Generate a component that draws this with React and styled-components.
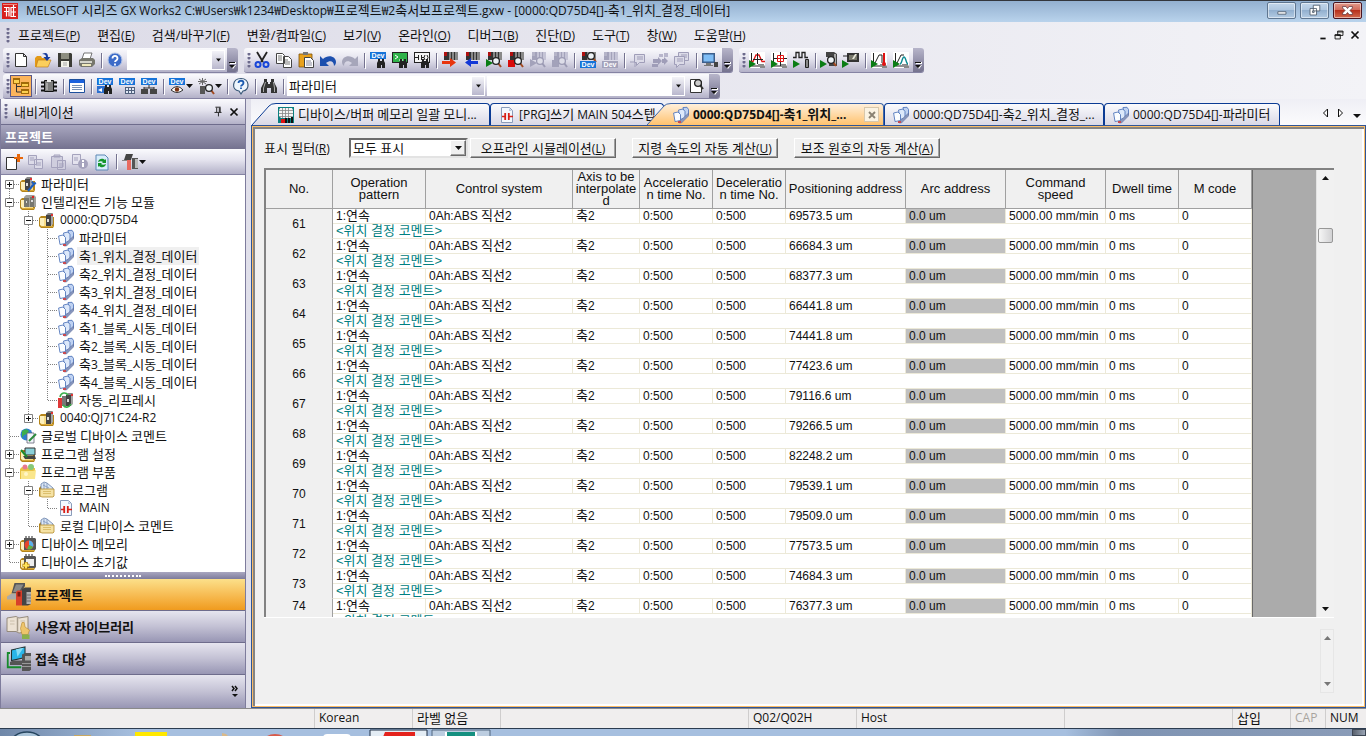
import { Fragment } from "react"
import styled, { createGlobalStyle, css } from "styled-components"

const MENUS = [
    ["프로젝트", "P"],
    ["편집", "E"],
    ["검색/바꾸기", "F"],
    ["변환/컴파일", "C"],
    ["보기", "V"],
    ["온라인", "O"],
    ["디버그", "B"],
    ["진단", "D"],
    ["도구", "T"],
    ["창", "W"],
    ["도움말", "H"],
]

const EDIT_TOOLS = [
    "cut", "copy", "paste", "undo", "redo", "|",
    "devFind", "commandFind", "contactFind", "|",
    "plcWrite", "plcRead", "monitorStart", "monitorStop", "monitorStartOff", "monitorStopOff", "|",
    "devWatch", "devWatchOff", "|",
    "noteOff", "moduleOff", "notesOff", "|",
    "computer",
]

const SIM_TOOLS = ["waveRed", "waveTarget", "pulse", "|", "testFind", "testMonitor", "|", "waveTemp", "waveTeal"]

// guides: "|" draws the line of an ancestor that has more siblings below
const TREE = [
    { text: "파라미터", icon: "folderTool", box: "+", first: true },
    { text: "인텔리전트 기능 모듈", icon: "folderModule", box: "-" },
    { text: "0000:QD75D4", icon: "folderUnit", guides: "|", box: "-" },
    { text: "파라미터", icon: "sheets", guides: "||" },
    { text: "축1_위치_결정_데이터", icon: "sheets", guides: "||", selected: true },
    { text: "축2_위치_결정_데이터", icon: "sheets", guides: "||" },
    { text: "축3_위치_결정_데이터", icon: "sheets", guides: "||" },
    { text: "축4_위치_결정_데이터", icon: "sheets", guides: "||" },
    { text: "축1_블록_시동_데이터", icon: "sheets", guides: "||" },
    { text: "축2_블록_시동_데이터", icon: "sheets", guides: "||" },
    { text: "축3_블록_시동_데이터", icon: "sheets", guides: "||" },
    { text: "축4_블록_시동_데이터", icon: "sheets", guides: "||" },
    { text: "자동_리프레시", icon: "autoRefresh", guides: "||", last: true },
    { text: "0040:QJ71C24-R2", icon: "folderUnit", guides: "|", box: "+", last: true },
    { text: "글로벌 디바이스 코멘트", icon: "globe" },
    { text: "프로그램 설정", icon: "folderLaptop", box: "+" },
    { text: "프로그램 부품", icon: "folderParts", box: "-" },
    { text: "프로그램", icon: "folderDocs", guides: "|", box: "-" },
    { text: "MAIN", icon: "ladder", guides: "||", last: true },
    { text: "로컬 디바이스 코멘트", icon: "folderDocs", guides: "|", last: true },
    { text: "디바이스 메모리", icon: "deviceMemory", box: "+" },
    { text: "디바이스 초기값", icon: "deviceInit", last: true },
]

const COLUMNS = [
    { width: 67, lines: ["No."] },
    { width: 93, lines: ["Operation", "pattern"] },
    { width: 147, lines: ["Control system"] },
    { width: 67, lines: ["Axis to be", "interpolate", "d"] },
    { width: 73, lines: ["Acceleratio", "n time No."] },
    { width: 73, lines: ["Deceleratio", "n time No."] },
    { width: 120, lines: ["Positioning address"] },
    { width: 100, lines: ["Arc address"] },
    { width: 100, lines: ["Command", "speed"] },
    { width: 73, lines: ["Dwell time"] },
    { width: 73, lines: ["M code"] },
]

const ADDRESSES = [
    "69573.5", "66684.3", "68377.3", "66441.8", "74441.8", "77423.6", "79116.6",
    "79266.5", "82248.2", "79539.1", "79509.0", "77573.5", "74684.3", "76377.3",
]

const FIRST_NO = 61

/* ---------- icon parts ---------- */

const Play = ({ x = 0, y = 8, fill = "#0a7d14" }) => <path d={`M${x} ${y}l7 4-7 4z`} fill={fill} />

const DevTag = ({ x = 0, y = 0, fill = "#1673d8" }) => (
    <>
        <rect x={x} y={y} width="16" height="7" fill={fill} />
        <text x={x + 8} y={y + 6} textAnchor="middle" fontSize="7" fontWeight="bold" fontFamily="Liberation Sans, sans-serif" fill="#fff">Dev</text>
    </>
)

const Binoculars = ({ x = 7, y = 7 }) => (
    <path d={`M${x + 1} ${y}h2v2h2v-2h2v2l1 2v5h-3v-3h-1v3h-4v-5l1-2z`} fill="#222" />
)

const Plc = ({ y = 0, a = "#b01010", b = "#333", c = "#888" }) => (
    <>
        <path d={`M2 ${y}h5v8h-5z`} fill={b} />
        <path d={`M2 ${y}h3v4h-3z`} fill={a} />
        <path d={`M7 ${y}h2v8h-2zM10 ${y}h2v8h-2zM13 ${y}h3v8h-3z`} fill={c} />
        <path d={`M9 ${y}h1v8h-1zM12 ${y}h1v8h-1z`} fill={b} />
    </>
)

const Lens = ({ x = 10, y = 9, stroke = "#222", fill = "#eef3f6", handle = "#a34a20" }) => (
    <>
        <path d={`M${x + 2} ${y + 2}l3 4`} stroke={handle} strokeWidth="2" />
        <circle cx={x} cy={y} r="3.4" fill={fill} stroke={stroke} strokeWidth="1.3" />
    </>
)

const Folder = () => (
    <>
        <path d="M0 6l2-2h5l1 1h7v9l-1 2H2l-2-2z" fill="#b5851a" />
        <path d="M1 6h12v8H3l-2-1z" fill="#f7dc86" />
        <path d="M1 6h4v8H3l-2-1z" fill="#fdf0bc" />
        <path d="M2 14h12v1H2z" fill="#d8a838" />
    </>
)

const Unit = ({ x = 7 }) => (
    <>
        <path d={`M${x} 3l2-2h5l-1 2z`} fill="#888" />
        <path d={`M${x} 3h5v11h-5z`} fill="#444" />
        <path d={`M${x + 5} 3l2-1v10l-2 2z`} fill="#a5a5a5" />
        <path d={`M${x + 1} 7h2v3h-2z`} fill="#ddd" />
        <path d={`M${x + 5} 2h2v2h-2z`} fill="#d33" />
    </>
)

const Note = ({ x = 4, y = 2 }) => (
    <>
        <path d={`M${x + 0.5} ${y + 0.5}h10v8h-5l-3 3v-3h-2z`} fill="#dcdbe8" stroke="#9f9db8" />
        <path d={`M${x + 3} ${y + 3}h6M${x + 3} ${y + 5}h6`} stroke="#9f9db8" />
    </>
)

const Axes = () => (
    <>
        <path d="M0 0h16v16H0z" fill="#fff" />
        <path d="M2.500 1v13h13" fill="none" stroke="#222" />
        <path d="M9 12h6v1H9zM11 14h5v2h-5z" fill="#888" />
    </>
)

const ICONS = {
    app: (
        <>
            <path d="M0 0h16v16H0z" fill="#d8201e" />
            <path d="M1 1h14v1H1z" fill="#f08a80" />
            <path d="M2 4.500h5v9M2 8.500h5M4.500 4.500v9M14 4.500H9v4.500h5M9 9v4.500h5M11.500 2v12" fill="none" stroke="#fff" strokeWidth="1.200" />
        </>
    ),
    newFile: <path d="M2.500 1.500h8l3 3v10h-11zM10.500 1.500v3h3" fill="#fff" stroke="#333" />,
    open: (
        <>
            <path d="M0 6l2-2h4l1 2h6v9H0z" fill="#e39a17" />
            <path d="M3 8h13l-3 7H1z" fill="#fbcf5c" stroke="#b87412" strokeWidth=".6" />
            <path d="M7 2c4-2 6-1 6 3h2.500l-3.500 4-3.500-4H11c0-2-1-3-4-3z" fill="#173c9e" />
        </>
    ),
    save: (
        <>
            <path d="M1 1h13l1 1v13H1z" fill="#3c3c36" />
            <path d="M4 1h8v6H4z" fill="#8d8d80" />
            <path d="M4 9h8v6H4z" fill="#f4f4ea" />
            <path d="M6 11h4M6 13h4" stroke="#aaa" />
        </>
    ),
    print: (
        <>
            <path d="M5 1h8l-2 6H3z" fill="#fff" stroke="#555" strokeWidth=".8" />
            <path d="M0 8l3-2h11l2 2v4l-3 3H2l-2-2z" fill="#77776d" />
            <path d="M1 9h12v2H1z" fill="#d5d5cc" />
            <path d="M3 12h9v2H3z" fill="#efe9bc" />
        </>
    ),
    help: (
        <>
            <circle cx="8" cy="8" r="7" fill="#3c6bc8" stroke="#b5c6e8" />
            <path d="M5.500 6.500c0-3.500 5-3.500 5 0 0 2-2.500 1.800-2.500 3.500M8 11.500v2" fill="none" stroke="#fff" strokeWidth="1.800" />
        </>
    ),
    cut: (
        <>
            <path d="M3 0l6 10M13 0L7 10" stroke="#222" strokeWidth="1.800" />
            <circle cx="4" cy="12.500" r="2.500" fill="none" stroke="#1746d8" strokeWidth="2" />
            <circle cx="12" cy="12.500" r="2.500" fill="none" stroke="#1746d8" strokeWidth="2" />
        </>
    ),
    copy: (
        <>
            <path d="M.5 1.500h6l2 2v8h-8zM7.500 4.500h5l3 3v8h-8z" fill="#fff" stroke="#444" />
            <path d="M2 4h4M2 6h4M2 8h4M9 8h3M9 10h5M9 12h5" stroke="#777" />
        </>
    ),
    paste: (
        <>
            <path d="M1 2h13v13H1z" fill="#e8a11c" stroke="#7c520a" strokeWidth=".8" />
            <path d="M5 0h5v3H5z" fill="#777" />
            <path d="M6.500 5.500h6l3 3v7h-9z" fill="#fff" stroke="#444" />
            <path d="M8 9h5M8 11h6M8 13h6" stroke="#889" />
        </>
    ),
    undo: <path d="M0 4l3 3c5-5 13-3 13 3 0 2-1 3-2 4 0-5-4-6-8-3l3 3H0z" fill="#1c4fae" />,
    redo: <path d="M16 4l-3 3C8 2 0 4 0 10c0 2 1 3 2 4 0-5 4-6 8-3l-3 3h9z" fill="#a6a6ba" />,
    devFind: <><DevTag /><Binoculars /></>,
    commandFind: (
        <>
            <path d="M0 0h16v11H0z" fill="#222" />
            <path d="M1 1h14v9H1z" fill="#2fb34a" />
            <path d="M3 3l3 2-3 2M7 8h4" fill="none" stroke="#fff" />
            <Binoculars />
        </>
    ),
    contactFind: (
        <>
            <path d="M0 0h16v11H0z" fill="#222" />
            <path d="M1 1h14v9H1z" fill="#f4f4f4" />
            <path d="M1 5.500h3M4.500 3v5M7.500 3v5M7 5.500h3M11 3q-2 2.500 0 5M13 3q2 2.500 0 5" fill="none" stroke="#222" />
            <Binoculars />
        </>
    ),
    plcWrite: <><Plc /><path d="M0 9h8V6l6 4.500L8 15v-3H0z" fill="#e8350e" /></>,
    plcRead: <><Plc /><path d="M14 9H7V6l-6 4.500L7 15v-3h7z" fill="#1338d6" /></>,
    monitorStart: <><Plc /><Play y={7} /><Lens /></>,
    monitorStop: <><Plc /><path d="M0 8h7v7H0z" fill="#d80c0c" /><Lens /></>,
    monitorStartOff: (
        <>
            <Plc a="#b5b4c8" b="#a3a2ba" c="#c5c4d6" />
            <Play y={7} fill="#a3a2ba" />
            <Lens stroke="#9c9bb4" handle="#9c9bb4" fill="#dddde8" />
        </>
    ),
    monitorStopOff: (
        <>
            <Plc a="#b5b4c8" b="#a3a2ba" c="#c5c4d6" />
            <path d="M0 8h7v7H0z" fill="#a3a2ba" />
            <Lens stroke="#9c9bb4" handle="#9c9bb4" fill="#dddde8" />
        </>
    ),
    devWatch: <><Plc /><Lens x={11} y={4} /><DevTag y={9} /></>,
    devWatchOff: <><Plc a="#b5b4c8" b="#a3a2ba" c="#c5c4d6" /><DevTag y={9} fill="#a3a2ba" /></>,
    noteOff: <><path d="M0 10h5v5" fill="none" stroke="#9f9db8" /><Note /></>,
    moduleOff: (
        <>
            <path d="M7 2h4v3H7zM12 1h4v4h-4z" fill="#b8b6cc" />
            <path d="M1 7h5V5l4 4-4 4v-2H1zM10 7h2V5l4 4-4 4v-2h-2zM0 12h6v3H0z" fill="#9f9db8" />
        </>
    ),
    notesOff: <><Note x={4} y={0} /><Note x={0} y={4} /></>,
    computer: (
        <>
            <path d="M0 1h13v10H0z" fill="#3d5f8c" />
            <path d="M1.500 2.500h10v7h-10z" fill="#7fbdf5" />
            <path d="M4 11h5v2H4zM2 13h9v1H2z" fill="#777" />
            <path d="M12 10h4v5h-4z" fill="#444" />
        </>
    ),
    waveRed: <><Axes /><path d="M1 9.500h3L7 3h3l3 6.500h3" fill="none" stroke="#e01212" strokeWidth="1.300" /><path d="M8.500 1v11M4 7.500h10" stroke="#222" /><Play /></>,
    waveTarget: <><Axes /><path d="M9.500 0v14M3 6.500h13" stroke="#222" /><path d="M6.500 3.500h6v6h-6zM6 6.500h7M9.500 3v7" fill="none" stroke="#e01212" /><Play /></>,
    pulse: <><path d="M0 5.500h3v-5h3v5h3v-5h3v5h3" fill="none" stroke="#222" strokeWidth="1.300" /><path d="M12.500 7.500h3v8h-3z" fill="#888" stroke="#222" /><Play /></>,
    testFind: <><path d="M5 0h8l3 2v12H8V5H5z" fill="#444" /><path d="M13 2h2v11h-2z" fill="#aaa" /><Lens x={10} y={8} /><Play x={-1} /></>,
    testMonitor: <><path d="M4 1h12v9H4z" fill="#333" /><path d="M6 3h8v5H6z" fill="#77776a" /><path d="M0 4h6" stroke="#222" /><path d="M12 2l2 0-3 5h-2z" fill="#e5e5d8" /><Play x={-1} /></>,
    waveTemp: <><Axes /><path d="M4 11l4-8h3v8" fill="none" stroke="#222" /><path d="M12 1h2v10h-2z" fill="#e01212" /><circle cx="13" cy="12" r="2" fill="#e01212" /><Play /></>,
    waveTeal: <><Axes /><path d="M4 11l4-8h3" fill="none" stroke="#222" /><path d="M7 12c2 0 2-7 4-7s2 7 4 7" fill="none" stroke="#0c8c94" strokeWidth="1.400" /><Play /></>,
    treeView: (
        <>
            <path d="M3.500 6v8h5M3.500 8.500h5" fill="none" stroke="#333" />
            <path d="M0 0h7v6H0zM8 4h8v5H8zM8 11h8v5H8z" fill="#a06a08" />
            <path d="M1 2h5v3H1zM9 6h6v2H9zM9 13h6v2H9z" fill="#fbd050" />
        </>
    ),
    chip: (
        <>
            <path d="M3.500 2.500h9v11h-9z" fill="#7d7d7d" stroke="#111" />
            <path d="M0 4.500h3M0 8.500h3M0 12.500h3M13 4.500h3M13 8.500h3M13 12.500h3" stroke="#111" strokeWidth="2" />
            <path d="M6 2h4v2H6z" fill="#eee" />
            <path d="M5 5h2v7H5z" fill="#a5a5a5" />
        </>
    ),
    list: (
        <>
            <path d="M.5 1.500h15v13H.5z" fill="#fff" stroke="#1d4f9c" />
            <path d="M1 2h14v3H1z" fill="#1c62dd" />
            <path d="M3 7.500h10M3 9.500h10M3 11.500h10" stroke="#7791b5" />
        </>
    ),
    devUse: <><DevTag /><path d="M0 8h8v7H0z" fill="#2b6fd0" /><path d="M1 12l4-2v4z" fill="#fff" /><Binoculars /></>,
    devTable: <><DevTag /><path d="M6 9h10v7H6z" fill="#50607c" /><path d="M7 10h2v2H7zM10 10h2v2h-2zM13 10h2v2h-2zM7 13h2v2H7zM10 13h2v2h-2zM13 13h2v2h-2z" fill="#dfe8f5" /></>,
    devLink: <><DevTag /><path d="M8 7v3M3 10h10M3 9v3M13 9v3" stroke="#333" /><path d="M0 11h7v5H0zM9 11h7v5H9z" fill="#444" /></>,
    devEye: <><DevTag /><path d="M2 12q6-7 12 0-6 5-12 0z" fill="#fff" stroke="#333" /><circle cx="8" cy="11.500" r="2.200" fill="#7a3314" /></>,
    unitFind: (
        <>
            <path d="M0 3.500h9M4.500 0v7M1 1l7 5M8 1L1 6" stroke="#666" />
            <path d="M2 8h5v8H2z" fill="#555" />
            <Lens x={11} y={10} />
        </>
    ),
    helpBubble: (
        <>
            <path d="M8 0.500c9 0 9 12 2 12.500l-2 3-2-3C-2 12-1 .5 8 .5z" fill="#eef5fc" stroke="#3a5878" strokeWidth="1.200" />
            <path d="M5.500 5c0-3 5-3 5 0 0 2-2.500 1.800-2.500 3.500M8 9.500v1.500" fill="none" stroke="#1c5bb0" strokeWidth="1.800" />
        </>
    ),
    binoculars: (
        <>
            <path d="M3 1h3v3h1v2h2V4h1V1h3v3l3 6v5h-6v-5H6v5H0v-5l3-6z" fill="#333" />
            <path d="M4 4h1L3 10v4H2v-4zM12 4l1 0 1 6v4h-1v-4z" fill="#aaa" />
        </>
    ),
    docFind: <><path d="M1.500 1.500h9l2 2v11h-11z" fill="#fff" stroke="#333" /><Lens x={9} y={5} fill="#ccc" handle="#333" /></>,
    docNew: (
        <>
            <path d="M.5 3.500h10v12H.5z" fill="#fff" stroke="#333" />
            <path d="M11 0h3v3h3v2h-3v3h-3V5H8V3h3z" fill="#e8680c" />
        </>
    ),
    copyOff: <path d="M.5 1.500h8v9h-8zM6.500 5.500h8v9h-8zM2 4h4M2 6h4M8 9h5M8 11h5" fill="#dcdbe8" stroke="#a5a3bd" />,
    pasteOff: <path d="M1.500 2.500h11v11h-11zM4 1h6v2H4zM7.500 6.500h8v9h-8zM9 10h5M9 12h5" fill="#cfcede" stroke="#a5a3bd" />,
    infoOff: (
        <>
            <path d="M.5 .5h8v10h-8zM2 4h4M2 6h4" fill="#e4e3ee" stroke="#a5a3bd" />
            <circle cx="11" cy="10" r="5" fill="#a5a3bd" />
            <path d="M11 6v2M11 9v4" stroke="#fff" strokeWidth="2" />
        </>
    ),
    reload: (
        <>
            <path d="M2 1h9l3 3v12H2z" fill="#d8ecfa" stroke="#5d88b5" />
            <path d="M4 8c1-4 5-4 7-2l1-1v4H8l1-1c-1-1-3-1-5 0zM12 10c-1 4-5 4-7 2l-1 1V9h4L7 10c1 1 3 1 5 0z" fill="#14962a" />
        </>
    ),
    sortModule: (
        <>
            <path d="M4 0h7L9 6H2z" fill="#444" />
            <path d="M0 6h9v1H0z" fill="#888" />
            <path d="M5 6h4v10H5z" fill="#e86a60" />
            <path d="M10 4h6v11h-6z" fill="#555" />
            <path d="M13 5h3v9h-3z" fill="#bbb" />
        </>
    ),
    monitorGrid: (
        <>
            <path d="M0 0h16v16H0z" fill="#0b7f80" />
            <path d="M2 1h12l1 2v6l-2 2H3L1 9V3z" fill="#f4f4f4" />
            <path d="M1 3.500h14M1 6.500h14M1 9.500h13M4.500 1v10M7.500 1v10M10.500 1v10" stroke="#888" strokeWidth=".8" />
            <path d="M3 12h4v4H3z" fill="#e01010" />
            <path d="M7 11h2v5H7zM10 11h2v5h-2zM13 10h2v6h-2z" fill="#111" />
        </>
    ),
    ladder: (
        <>
            <path d="M2.500 .5h8l3 3v12h-11z" fill="#f4f8fe" stroke="#8a9cba" />
            <path d="M10 1v3h3z" fill="#b9c8de" />
            <path d="M3 9.500h3M10 9.500h4" stroke="#d82018" strokeWidth="1.400" />
            <path d="M6.200 6v7M9.800 6v7" stroke="#d82018" strokeWidth="1.800" />
        </>
    ),
    sheets: (
        <>
            <path d="M10 .5l4-.2 1.500 2.200V8L12 10z" fill="#bfd2f2" stroke="#5478bc" strokeWidth=".9" />
            <path d="M5.500 3l4.500-1 2 2.500v6.500l-5 1.500z" fill="#dce8fa" stroke="#5478bc" strokeWidth=".9" />
            <path d="M.6 6l4.400-1 2.500 2.500v6l-5.500 1z" fill="#fbfdff" stroke="#5478bc" strokeWidth=".9" />
            <path d="M7.500 13.500l8-7.500v3l-7 7-2.500 0z" fill="#8796bd" stroke="#5b6a98" strokeWidth=".5" />
            <path d="M5 14h3v2H5z" fill="#c84a50" />
        </>
    ),
    folderTool: <><Folder /><Unit x={5} /><path d="M8 15l6-7M12 5.500l1.500 2.500 2.500-1" fill="none" stroke="#1c5fc0" strokeWidth="2" /></>,
    folderModule: (
        <>
            <Folder />
            <path d="M4 3l2-2h8l2 2v10H4z" fill="#a2a29c" />
            <path d="M4 4h5v9H4zM10 3h4v10h-4z" fill="#77776f" />
            <path d="M6 7h1v2H6zM11 6h2v2h-2z" fill="#ddd" />
            <path d="M12 2h2v2h-2z" fill="#d22" />
        </>
    ),
    folderUnit: <><Folder /><Unit /></>,
    folderLaptop: <><Folder /><path d="M5 2h10v7H5z" fill="#8ad0d8" stroke="#333" /><path d="M3 10h12l1 3H5z" fill="#444" /><path d="M1 4l6 7" stroke="#1c8a2c" strokeWidth="2" /></>,
    folderParts: (
        <>
            <path d="M0 5l2-2h5l1 1h7v11H0z" fill="#e8c244" />
            <circle cx="5" cy="3" r="2.500" fill="#e87a90" />
            <circle cx="11" cy="3" r="3" fill="#86c878" />
            <path d="M1 7h12l3-1-1 9H1z" fill="#fae68c" />
            <circle cx="6" cy="10" r="2" fill="#fff6c8" />
        </>
    ),
    folderDocs: (
        <>
            <path d="M0 6l2-2v10l-1 1-1-1z" fill="#b5851a" />
            <path d="M2 2l3-2 3 1 6 5v5H2z" fill="#dbe7f6" stroke="#667fa8" strokeWidth=".8" />
            <path d="M5 1v7M8 1v7M4 3l6 3" stroke="#7f95ba" strokeWidth=".8" />
            <path d="M1 7h12l2 0v7l-1 1H3l-2-1z" fill="#f5e2a4" stroke="#b28b2c" strokeWidth=".8" />
            <path d="M4 9.500h8M4 11.500h8" stroke="#dcbf6c" />
        </>
    ),
    autoRefresh: <><Unit x={8} /><path d="M0 6h4v10H0z" fill="#e03838" /><path d="M4 4h4v10H4z" fill="#777" /><path d="M2 5c1-5 6-5 8-2M13 12c-2 4-6 4-8 1" fill="none" stroke="#3bb04c" strokeWidth="1.600" /></>,
    globe: (
        <>
            <circle cx="6.500" cy="6.500" r="6" fill="#2d7fd0" />
            <path d="M2 3l4-2 3 2-2 3-3 1-2 3zM8 7l3 1-1 3-3 1z" fill="#3cae4c" />
            <path d="M7 5h7v10H7z" fill="#f2f6fc" stroke="#667" strokeWidth=".8" />
            <path d="M9 13l7-7" stroke="#2c8a3c" strokeWidth="2" />
        </>
    ),
    deviceMemory: (
        <>
            <Folder />
            <path d="M4 2h11l1 1v10l-1 1H4z" fill="#555" />
            <path d="M6 0v2M9 0v2M12 0v2" stroke="#222" />
            <circle cx="9" cy="9" r="4.500" fill="#e8462c" />
            <path d="M9 9V4.500A4.500 4.500 0 0 1 13 11z" fill="#5ab0ec" />
            <path d="M9 9l4 2a4.500 4.500 0 0 1-6 2z" fill="#59b548" />
        </>
    ),
    deviceInit: (
        <>
            <Folder />
            <path d="M4 2h11l1 1v10l-1 1H4z" fill="#555" />
            <path d="M6 5h8v7H6z" fill="#eee" />
            <path d="M6 0v2M9 0v2M12 0v2" stroke="#222" />
            <path d="M6 8v7M2.500 11.500h7" stroke="#a87408" strokeWidth="3.500" />
            <path d="M6 8.500v6M3 11.500h6" stroke="#ffe45c" strokeWidth="2" />
        </>
    ),
    navProject: (
        <>
            <path d="M5 0h7v2L9 7H3z" fill="#555" />
            <path d="M6 1h5L8 6H4z" fill="#8a8a88" />
            <path d="M0 9l3-2h6v2l-2 2H0z" fill="#aaa" />
            <path d="M6 6l1-1h3v10H6z" fill="#d8402a" />
            <path d="M7 6h2v3H7z" fill="#7c1c14" />
            <path d="M10 4l2-1h4v11l-2 1h-4z" fill="#444" />
            <path d="M13 6h3v8h-3z" fill="#b0b0b0" />
            <path d="M13 8h3M13 10h3M13 12h3" stroke="#666" strokeWidth=".6" />
        </>
    ),
    navLibrary: (
        <>
            <path d="M0 2l6-1 2 1 6-1v10l-6 1-2-1-6 0z" fill="#ece2d4" stroke="#8d8273" strokeWidth=".6" />
            <path d="M7 2v9" stroke="#a89d8c" />
            <path d="M2 4h3M2 6h3M9 4h3" stroke="#c8bca8" strokeWidth=".6" />
            <path d="M9 9l1-4 1.500 0 .5 3 3 2-1 3h-4z" fill="#edc56c" stroke="#b8872c" strokeWidth=".4" />
            <path d="M10 13h5v3h-5z" fill="#8ab04c" />
        </>
    ),
    navTarget: (
        <>
            <path d="M2 4H.5v9.500h9" fill="none" stroke="#168a2c" strokeWidth="1.200" />
            <path d="M3 2l9-2v7l-9 2z" fill="#29b5e8" stroke="#233" strokeWidth=".7" />
            <path d="M6 1.500l5-1-4 6z" fill="#84dcf6" />
            <path d="M2 10l2-1h7v3H2z" fill="#555" />
            <path d="M10 5l2-1h4v11l-1 1h-5z" fill="#555" />
            <path d="M12 6h4v3h-4z" fill="#aaa" />
            <path d="M10 11h6M10 13h6" stroke="#999" strokeWidth=".7" />
        </>
    ),
    minimize: <path d="M3.500 9.500h10v3h-10z" fill="#fff" stroke="#4a5868" />,
    restore: <path d="M6.500 1.500h8v7h-8zM2.500 5.500h8v8h-8zM5.500 8.500h2v2h-2z" fill="#fff" stroke="#4a5868" />,
    close: <path d="M2 3h4l2 2.500L10 3h4v2l-3 3 3 3v2h-4L8 10.500 6 13H2v-2l3-3-3-3z" fill="#fff" stroke="#5a3038" strokeWidth=".9" />,
    childMin: <path d="M5 11h6v2H5z" fill="#111" />,
    childRestore: <path d="M6.500 3.500h6v5h-6zM6 4.500h7M3.500 7.500h6v5h-6zM3 8.500h7" fill="#eee" stroke="#111" />,
    childClose: <path d="M4 4l8 8M12 4l-8 8" stroke="#111" strokeWidth="2" />,
    tabClose: <path d="M4 4l8 8M12 4l-8 8" stroke="#8a8272" strokeWidth="2.500" />,
    pin: <path d="M5 2.500h6M6.500 3v5M9.500 3v5M10.500 3v5M4 8.500h8M8.500 9v4" fill="none" stroke="#111" />,
    tabLeft: <path d="M10.500 4v8l-4-4z" fill="#fff" stroke="#111" />,
    tabRight: <path d="M5.500 4v8l4-4z" fill="#fff" stroke="#111" />,
    tabDown: <path d="M4 9h8l-4 4z" fill="#111" />,
}

const Icon = ({ name, size = 16 }) => (
    <IconSvg width={size} height={size} viewBox="0 0 16 16" aria-hidden="true">{ICONS[name]}</IconSvg>
)

const Arrow = ({ up, fill = "#111" }) => (
    <IconSvg width="7" height="4" viewBox="0 0 7 4" aria-hidden="true">
        <path d={up ? "M0 4h7L3.500 0z" : "M0 0h7L3.500 4z"} fill={fill} />
    </IconSvg>
)

// hangul reads one size larger than the latin text beside it
const Mixed = ({ children }) => (
    <span>
        {children.split(/([가-힣]+)/).map((part, i) => i % 2 ? <Hangul key={i}>{part}</Hangul> : part)}
    </span>
)

const Overflow = () => (
    <OverflowButton aria-label="도구 모음 옵션">
        <IconSvg width="7" height="7" viewBox="0 0 7 7">
            <path d="M1 0h6v2H1zM1 3h6L4 7z" fill="#fff" />
            <path d="M0 0h6v1H0zM0 3h6L3 6z" fill="#111" />
        </IconSvg>
    </OverflowButton>
)

const ToolButtons = ({ items }) =>
    items.map((name, i) =>
        name === "|"
            ? <Separator key={i} />
            : <ToolButton key={i} aria-label={name}><Icon name={name} /></ToolButton>
    )

const Combo = ({ label, value, width }) => (
    <ComboBox $width={width}>
        <select aria-label={label} defaultValue={value}>
            <option>{value}</option>
        </select>
        <ComboArrow><Arrow /></ComboArrow>
    </ComboBox>
)

/* ---------- window parts ---------- */

function TitleBar() {
    return (
        <TitleWrapper>
            <Icon name="app" />
            <h1><Mixed>MELSOFT 시리즈 GX Works2 C:₩Users₩k1234₩Desktop₩프로젝트₩2축서보프로젝트.gxw - [0000:QD75D4[]-축1_위치_결정_데이터]</Mixed></h1>
            <WindowButton aria-label="최소화"><Icon name="minimize" /></WindowButton>
            <WindowButton aria-label="이전 크기로"><Icon name="restore" /></WindowButton>
            <WindowButton aria-label="닫기" $danger><Icon name="close" /></WindowButton>
        </TitleWrapper>
    )
}

function MenuBar() {
    return (
        <MenuWrapper>
            <Grip />
            {MENUS.map(([text, key]) => (
                <MenuButton key={key}>{text}<Accel>(<u>{key}</u>)</Accel></MenuButton>
            ))}
            <ChildButtons>
                <IconButton aria-label="최소화"><Icon name="childMin" size={14} /></IconButton>
                <IconButton aria-label="이전 크기로"><Icon name="childRestore" size={14} /></IconButton>
                <IconButton aria-label="닫기"><Icon name="childClose" size={14} /></IconButton>
            </ChildButtons>
        </MenuWrapper>
    )
}

function Toolbars() {
    return (
        <ToolbarArea>
            <ToolbarRow>
                <Toolbar>
                    <Grip />
                    <ToolButtons items={["newFile", "open", "save", "print", "|", "help"]} />
                    <Combo label="도움말 검색" value="" width={98} />
                    <Overflow />
                </Toolbar>
                <Toolbar>
                    <Grip />
                    <ToolButtons items={EDIT_TOOLS} />
                    <Overflow />
                </Toolbar>
                <Toolbar>
                    <Grip />
                    <ToolButtons items={SIM_TOOLS} />
                    <Overflow />
                </Toolbar>
            </ToolbarRow>
            <ToolbarRow>
                <Toolbar>
                    <Grip />
                    <ToolButton aria-label="내비게이션" $active><Icon name="treeView" /></ToolButton>
                    <ToolButtons items={["|", "chip", "|", "list", "|", "devUse", "devTable", "devLink", "|"]} />
                    <ToolButton aria-label="디바이스 표시" $split><Icon name="devEye" /><Arrow /></ToolButton>
                    <ToolButton aria-label="유닛 검색" $split><Icon name="unitFind" /><Arrow /></ToolButton>
                    <ToolButtons items={["|", "helpBubble", "|", "binoculars", "|"]} />
                    <Combo label="검색 대상" value="파라미터" width={198} />
                    <Combo label="검색어" value="" width={198} />
                    <ToolButton aria-label="찾기"><Icon name="docFind" /></ToolButton>
                    <Overflow />
                </Toolbar>
            </ToolbarRow>
        </ToolbarArea>
    )
}

function Guide({ line, box, first, last }) {
    return (
        <IconSvg width="19" height="18" viewBox="0 0 19 18" aria-hidden="true">
            <g stroke="#808080" strokeDasharray="1 1">
                {line && <path d="M8.500 0v18" />}
                {!line && !first && <path d="M8.500 0v9" />}
                {!line && !last && <path d="M8.500 10v8" />}
                {!line && <path d="M9 9.500h10" />}
            </g>
            {box && (
                <>
                    <path d="M4.500 5.500h8v8h-8z" fill="#fff" stroke="#808080" />
                    <path d={box === "+" ? "M6 9.500h5M8.500 7v5" : "M6 9.500h5"} stroke="#111" />
                </>
            )}
        </IconSvg>
    )
}

function Navigation() {
    return (
        <NavWrapper>
            <NavHeader>
                <Grip />
                <h2>내비게이션</h2>
                <IconButton aria-label="자동 숨김"><Icon name="pin" size={14} /></IconButton>
                <IconButton aria-label="닫기"><Icon name="childClose" size={14} /></IconButton>
            </NavHeader>
            <NavTitle>프로젝트</NavTitle>
            <NavTools>
                <ToolButtons items={["docNew", "copyOff", "pasteOff", "infoOff", "reload", "|"]} />
                <ToolButton aria-label="정렬" $split><Icon name="sortModule" /><Arrow /></ToolButton>
            </NavTools>
            <Tree>
                {TREE.map((node, i) => (
                    <TreeRow key={i}>
                        {(node.guides || "").split("").map((g, j) => <Guide key={j} line={g === "|"} />)}
                        <Guide box={node.box} first={node.first} last={node.last} />
                        <Icon name={node.icon} />
                        <TreeLabel $selected={node.selected}><Mixed>{node.text}</Mixed></TreeLabel>
                    </TreeRow>
                ))}
            </Tree>
            <Splitter />
            <NavButton $active><Icon name="navProject" size={24} />프로젝트</NavButton>
            <NavButton><Icon name="navLibrary" size={24} />사용자 라이브러리</NavButton>
            <NavButton><Icon name="navTarget" size={24} />접속 대상</NavButton>
            <NavFooter>
                <IconButton aria-label="단추 구성">
                    <IconSvg width="8" height="12" viewBox="0 0 8 12">
                        <path d="M1 0l2 2.500L1 5M4 0l2 2.500L4 5" fill="none" stroke="#111" strokeWidth="1.500" />
                        <path d="M1 8h6l-3 3z" fill="#111" />
                    </IconSvg>
                </IconButton>
            </NavFooter>
        </NavWrapper>
    )
}

const Slant = ({ active }) => (
    <SlantSvg width="24" height="22" viewBox="0 0 24 22" aria-hidden="true">
        <defs>
            <linearGradient id={active ? "slantOn" : "slantOff"} x1="0" y1="0" x2="0" y2="1">
                <stop offset="0" stopColor={active ? "#fff0dc" : "#fbfbfd"} />
                <stop offset="1" stopColor={active ? "#ffc26e" : "#d9d8e6"} />
            </linearGradient>
        </defs>
        <path d="M0 22L17 3Q19 .5 24 .5V22z" fill={`url(#${active ? "slantOn" : "slantOff"})`} />
        <path d="M0 22L17 3Q19 .5 24 .5" fill="none" stroke={active ? "#3f66a8" : "#0b3b94"} />
    </SlantSvg>
)

function TabStrip() {
    return (
        <TabBar>
            <Slant />
            <Tab $width={214} $joined><Icon name="monitorGrid" /><Mixed>디바이스/버퍼 메모리 일괄 모니...</Mixed></Tab>
            <Tab $width={174}><Icon name="ladder" /><Mixed>[PRG]쓰기 MAIN 504스텝</Mixed></Tab>
            <ActiveTab>
                <Slant active />
                <Tab $width={213} $joined $active>
                    <Icon name="sheets" />
                    <Mixed>0000:QD75D4[]-축1_위치_...</Mixed>
                    <TabClose aria-label="탭 닫기"><Icon name="tabClose" size={12} /></TabClose>
                </Tab>
            </ActiveTab>
            <Tab $width={220}><Icon name="sheets" /><Mixed>0000:QD75D4[]-축2_위치_결정_...</Mixed></Tab>
            <Tab $width={176}><Icon name="sheets" /><Mixed>0000:QD75D4[]-파라미터</Mixed></Tab>
            <TabControls>
                <IconButton aria-label="이전 탭"><Icon name="tabLeft" /></IconButton>
                <IconButton aria-label="다음 탭"><Icon name="tabRight" /></IconButton>
                <IconButton aria-label="탭 목록"><Icon name="tabDown" /></IconButton>
            </TabControls>
        </TabBar>
    )
}

function PositioningTable() {
    return (
        <Table>
            <colgroup>
                {COLUMNS.map((column, i) => <col key={i} style={{ width: column.width }} />)}
            </colgroup>
            <thead>
                <tr>
                    {COLUMNS.map((column, i) => (
                        <th key={i} scope="col">
                            {column.lines.map((line, j) => <Fragment key={j}>{j > 0 && <br />}{line}</Fragment>)}
                        </th>
                    ))}
                </tr>
            </thead>
            <tbody>
                {ADDRESSES.map((address, i) => (
                    <Fragment key={i}>
                        <tr>
                            <NoCell scope="row" rowSpan={2} $clipped={i === ADDRESSES.length - 1}>{FIRST_NO + i}</NoCell>
                            <td><Mixed>1:연속</Mixed></td>
                            <td><Mixed>0Ah:ABS 직선2</Mixed></td>
                            <td><Mixed>축2</Mixed></td>
                            <td>0:500</td>
                            <td>0:500</td>
                            <td>{address} um</td>
                            <ArcCell>0.0 um</ArcCell>
                            <td>5000.00 mm/min</td>
                            <td>0 ms</td>
                            <td>0</td>
                        </tr>
                        <tr>
                            <CommentCell colSpan={10}>&lt;위치 결정 코멘트&gt;</CommentCell>
                        </tr>
                    </Fragment>
                ))}
            </tbody>
        </Table>
    )
}

function Editor() {
    return (
        <EditorFrame>
            <FilterRow>
                <label htmlFor="filter">표시 필터<Accel>(<u>R</u>)</Accel></label>
                <FilterBox>
                    <select id="filter"><option>모두 표시</option></select>
                    <FilterArrow><Arrow /></FilterArrow>
                </FilterBox>
                <CommandButton>오프라인 시뮬레이션<Accel>(<u>L</u>)</Accel></CommandButton>
                <CommandButton $spaced>지령 속도의 자동 계산<Accel>(<u>U</u>)</Accel></CommandButton>
                <CommandButton $spaced>보조 원호의 자동 계산<Accel>(<u>A</u>)</Accel></CommandButton>
            </FilterRow>
            <GridBox>
                <GridClip><PositioningTable /></GridClip>
                <ScrollBar>
                    <Arrow up />
                    <ScrollTrack><ScrollThumb /></ScrollTrack>
                    <Arrow />
                </ScrollBar>
            </GridBox>
            <Description>
                <ScrollBar $faint>
                    <Arrow up fill="#777" />
                    <Arrow fill="#777" />
                </ScrollBar>
            </Description>
        </EditorFrame>
    )
}

function StatusBar() {
    return (
        <StatusWrapper>
            <StatusCell $grow />
            <StatusCell $width={98}>Korean</StatusCell>
            <StatusCell $width={88} $hangul>라벨 없음</StatusCell>
            <StatusCell $width={248} />
            <StatusCell $width={108}>Q02/Q02H</StatusCell>
            <StatusCell $width={208}>Host</StatusCell>
            <StatusCell $width={168} />
            <StatusCell $width={58} $hangul>삽입</StatusCell>
            <StatusCell $width={35} $muted>CAP</StatusCell>
            <StatusCell $width={40}>NUM</StatusCell>
        </StatusWrapper>
    )
}

function TaskBar() {
    return (
        <TaskWrapper>
            <svg width="520" height="8" viewBox="0 0 520 8" aria-hidden="true">
                <ellipse cx="27" cy="16" rx="17" ry="13" fill="#a9c3d8" stroke="#26455f" strokeWidth="1.500" />
                <path d="M74 6h17v2H74z" fill="#c9a860" />
                <path d="M135 3h32v5h-32z" fill="#ffe800" />
                <path d="M222 4l4 1 3 3h-7z" fill="#d9b98a" />
                <ellipse cx="275" cy="13" rx="12" ry="8" fill="#d85a4a" />
                <rect x="323" y="5" width="28" height="8" rx="4" fill="#fff" />
                <path d="M370 8V1h57v7" fill="#e4edf5" stroke="#1f2f45" />
                <path d="M385 3h30v5h-32z" fill="#e4231d" />
                <path d="M432 8V1h58v7" fill="#bccde0" stroke="#51667f" />
                <path d="M445 3h32v5h-32z" fill="#fff" />
                <path d="M447 3h28v5h-28z" fill="#159080" />
            </svg>
            <ShowDesktop aria-label="바탕 화면 보기" />
        </TaskWrapper>
    )
}

export default function App() {
    return (
        <>
            <GlobalStyle />
            <Window>
                <TitleBar />
                <MenuBar />
                <Toolbars />
                <Workspace>
                    <Navigation />
                    <Documents>
                        <TabStrip />
                        <Editor />
                    </Documents>
                </Workspace>
                <StatusBar />
                <TaskBar />
            </Window>
        </>
    )
}

/* ---------- styles ---------- */

const uiFont = `"Open Sans", "Noto Sans CJK KR", sans-serif`
const gridFont = `"Liberation Sans", "Noto Sans CJK KR", sans-serif`

const silver = css`
    background: linear-gradient(#fafafd, #e4e3ee 45%, #b3b1c8);
`

const GlobalStyle = createGlobalStyle`
    *{
        box-sizing: border-box;
    }
    body{
        margin: 0;
        font-family: ${uiFont};
        font-size: 13px;
        line-height: 18px;
        color: #111;
    }
    h1, h2{
        margin: 0;
        font-weight: normal;
    }
    button, select{
        font: inherit;
        color: inherit;
        border: 0;
        padding: 0;
        margin: 0;
        background: none;
    }
    select{
        appearance: none;
        outline: 0;
    }
`

const Window = styled.div`
    height: 100vh;
    display: flex;
    flex-direction: column;
    overflow: hidden;
    white-space: nowrap;
    background: linear-gradient(90deg, #dcdbe7, #f3f3f7);
`

const IconSvg = styled.svg`
    display: block;
    flex: none;
    overflow: visible;
`

const Hangul = styled.span`
    font-size: 13px;
`

const Accel = styled.span`
    font-size: 12px;
`

const IconButton = styled.button`
    display: flex;
`

const TitleWrapper = styled.header`
    height: 22px;
    flex: none;
    display: flex;
    align-items: center;
    gap: 4px;
    padding: 0 4px 2px 2px;
    border-top: 1px solid #33363c;
    background: linear-gradient(#93b0d0, #b9d3ec);
    h1{
        flex: 1;
        min-width: 0;
        overflow: hidden;
        padding-left: 4px;
        font-size: 12px;
        line-height: 18px;
    }
`

const WindowButton = styled.button`
    width: 29px;
    height: 17px;
    display: flex;
    align-items: center;
    justify-content: center;
    border: 1px solid ${props => props.$danger ? "#4a1420" : "#5f7690"};
    border-radius: 2px;
    box-shadow: inset 0 0 0 1px rgba(255, 255, 255, 0.5);
    background: ${props => props.$danger
        ? "linear-gradient(#e39a8c, #cf6656 50%, #b8301c 50%, #d2694e)"
        : "linear-gradient(#c3d6ea, #adc5de 50%, #93b0cf 50%, #b3cbe3)"};
    svg{
        width: 13px;
        height: 13px;
    }
`

const MenuWrapper = styled.nav`
    height: 26px;
    flex: none;
    display: flex;
    align-items: center;
    gap: 17px;
    padding: 0 4px 0 3px;
    > :first-child{
        margin-right: -9px;
    }
`

const MenuButton = styled.button`
    line-height: 20px;
`

const ChildButtons = styled.div`
    display: flex;
    gap: 2px;
    margin-left: auto;
`

const Grip = styled.span`
    width: 7px;
    height: 15px;
    flex: none;
    background: radial-gradient(circle at 5px 1px, #6c6a8c 1px, transparent 2px) 0 0 / 7px 4px;
`

const ToolbarArea = styled.div`
    flex: none;
    display: grid;
    gap: 1px;
    padding: 0 3px;
`

const ToolbarRow = styled.div`
    display: flex;
    gap: 6px;
`

const Toolbar = styled.div`
    height: 25px;
    display: flex;
    align-items: center;
    border-radius: 3px;
    border-bottom: 1px solid #8583a3;
    ${silver}
`

const ToolButton = styled.button`
    width: ${props => props.$split ? 29 : 22}px;
    height: 22px;
    flex: none;
    display: flex;
    align-items: center;
    gap: 1px;
    padding-left: 3px;
    ${props => props.$active && `
        padding-left: 2px;
        border: 1px solid #5a5888;
        background: #fbb45c;
    `}
`

const Separator = styled.span`
    width: 1px;
    height: 15px;
    flex: none;
    margin: 0 2px 0 3px;
    background: #74728f;
    box-shadow: 1px 1px 0 #fff;
`

const OverflowButton = styled.button`
    width: 11px;
    height: 24px;
    display: flex;
    align-items: flex-end;
    padding: 0 2px 3px;
    margin-left: 1px;
    border-radius: 0 3px 3px 0;
    background: linear-gradient(#b7b5ca, #75738f);
`

const ComboBox = styled.span`
    width: ${props => props.$width}px;
    height: 20px;
    flex: none;
    display: flex;
    margin: 0 1px;
    background: #fff;
    select{
        flex: 1;
        padding-left: 2px;
    }
`

const ComboArrow = styled.span`
    width: 12px;
    margin: 1px;
    display: grid;
    place-items: center;
    background: linear-gradient(#f3f3f8, #b9b7cd);
    svg{
        width: 5px;
    }
`

const Workspace = styled.div`
    flex: 1;
    min-height: 0;
    display: flex;
    gap: 5px;
`

const NavWrapper = styled.aside`
    width: 246px;
    flex: none;
    display: flex;
    flex-direction: column;
    border: solid #7e7c9c;
    border-width: 0 1px;
`

const NavHeader = styled.div`
    height: 25px;
    flex: none;
    display: flex;
    align-items: center;
    gap: 2px;
    padding-right: 4px;
    ${silver}
    h2{
        flex: 1;
        padding-left: 4px;
        font-size: 13px;
    }
`

const NavTitle = styled.div`
    height: 25px;
    flex: none;
    padding: 3px 4px;
    font-weight: bold;
    color: #fff;
    border-top: 1px solid #6e6c8c;
    background: linear-gradient(#a9a7c0, #74728f);
`

const NavTools = styled.div`
    height: 26px;
    flex: none;
    display: flex;
    align-items: center;
    padding-left: 2px;
    border-bottom: 1px solid #8583a3;
    ${silver}
`

const Tree = styled.div`
    flex: 1;
    min-height: 0;
    overflow: hidden;
    background: #fff;
`

const TreeRow = styled.div`
    height: 18px;
    display: flex;
    align-items: center;
`

const TreeLabel = styled.span`
    height: 18px;
    margin-left: 3px;
    padding: 0 2px;
    font-size: 12px;
    line-height: 18px;
    background: ${props => props.$selected ? "#f0f0f0" : "none"};
`

const Splitter = styled.div`
    height: 7px;
    flex: none;
    display: flex;
    justify-content: center;
    align-items: center;
    background: linear-gradient(#a9a7c0, #7e7c9c);
    &::after{
        content: "";
        width: 36px;
        border-top: 2px dotted #fff;
    }
`

const NavButton = styled.button`
    height: 32px;
    flex: none;
    display: flex;
    align-items: center;
    gap: 4px;
    padding-left: 6px;
    font-weight: bold;
    border-bottom: 1px solid #6e6c8c;
    background: ${props => props.$active
        ? "linear-gradient(#fce08a, #f7bd55 50%, #f09b1e)"
        : "linear-gradient(#e6e5ef, #c3c1d4 50%, #9896b4)"};
`

const NavFooter = styled.div`
    height: 33px;
    flex: none;
    display: flex;
    align-items: center;
    justify-content: flex-end;
    padding-right: 6px;
    background: linear-gradient(#e6e5ef, #c3c1d4 50%, #9896b4);
`

const Documents = styled.main`
    flex: 1;
    min-width: 0;
    display: flex;
    flex-direction: column;
`

const TabBar = styled.div`
    height: 26px;
    flex: none;
    display: flex;
    align-items: flex-end;
    padding-left: 1px;
    background: linear-gradient(#efeff5, #fbfbfd);
`

const SlantSvg = styled.svg`
    display: block;
    flex: none;
`

const Tab = styled.button`
    width: ${props => props.$width}px;
    height: 22px;
    display: flex;
    align-items: center;
    gap: 4px;
    padding-left: ${props => props.$joined ? 2 : 8}px;
    overflow: hidden;
    font-size: 12px;
    font-weight: ${props => props.$active ? "bold" : "normal"};
    border: solid ${props => props.$active ? "#3f66a8" : "#0b3b94"};
    border-width: 1px 1px 0 ${props => props.$joined ? 0 : 1}px;
    border-radius: ${props => props.$joined ? 0 : 4}px 4px 0 0;
    background: ${props => props.$active
        ? "linear-gradient(#fff0dc, #ffc26e)"
        : "linear-gradient(#fbfbfd, #d9d8e6)"};
`

const ActiveTab = styled.div`
    display: flex;
    margin-left: -17px;
    z-index: 1;
`

const TabClose = styled.span`
    width: 15px;
    height: 15px;
    display: grid;
    place-items: center;
    margin: 0 4px 0 auto;
    border: 1px solid #d8c8ac;
    background: #fbf3e2;
`

const TabControls = styled.div`
    display: flex;
    align-items: center;
    height: 24px;
    margin-left: auto;
    padding-right: 1px;
`

const EditorFrame = styled.section`
    flex: 1;
    min-height: 0;
    display: flex;
    flex-direction: column;
    padding: 10px 31px 0 10px;
    border: 1px solid #2f5597;
    box-shadow: inset 0 0 0 1px #fbbc66, inset 2px 2px 0 1px #848484, inset -2px -2px 0 1px #fff;
    background: #f0f0f0;
`

const FilterRow = styled.div`
    flex: none;
    display: flex;
    align-items: center;
    padding: 2px 2px 10px;
    label{
        width: 85px;
    }
`

const FilterBox = styled.span`
    width: 119px;
    height: 20px;
    display: flex;
    margin-right: 2px;
    border: 2px solid #6c6c6c;
    border-right-color: #e3e3e3;
    border-bottom-color: #e3e3e3;
    background: #fff;
    select{
        flex: 1;
        padding-left: 2px;
        line-height: 16px;
    }
`

const raised = css`
    border: 1px solid;
    border-color: #fff #696969 #696969 #fff;
    box-shadow: inset -1px -1px 0 #a0a0a0;
    background: #f0f0f0;
`

const FilterArrow = styled.span`
    width: 16px;
    display: grid;
    place-items: center;
    ${raised}
`

const CommandButton = styled.button`
    width: 146px;
    height: 20px;
    margin-left: ${props => props.$spaced ? 16 : 0}px;
    line-height: 16px;
    ${raised}
`

const GridBox = styled.div`
    flex: 1;
    min-height: 0;
    display: flex;
    margin-left: 2px;
    border: solid #828282;
    border-width: 2px 0 0 2px;
    box-shadow: 0 1px 0 #fff;
    background: #ababab;
`

const GridClip = styled.div`
    flex: 1;
    min-width: 0;
    overflow: hidden;
`

const Table = styled.table`
    width: 986px;
    table-layout: fixed;
    border-collapse: separate;
    border-spacing: 0;
    border-right: 1px solid #696969;
    font-family: ${gridFont};
    font-size: 12px;
    line-height: 14px;
    background: #fff;
    th, td{
        padding: 0 3px;
        overflow: hidden;
        border: solid #ece9d8;
        border-width: 0 1px 1px 0;
        text-align: left;
        font-weight: normal;
    }
    tbody td{
        height: 15px;
    }
    thead th{
        height: 39px;
        padding: 0;
        font-size: 13px;
        line-height: 12px;
        text-align: center;
        border-color: #a0a0a0;
        background: #f0f0f0;
    }
    td > span{
        display: block;
        height: 14px;
    }
`

const NoCell = styled.th`
    && {
        text-align: center;
        vertical-align: ${props => props.$clipped ? "top" : "middle"};
        border-color: #f0f0f0 #a0a0a0 #f0f0f0 #f0f0f0;
        background: #f0f0f0;
    }
`

const ArcCell = styled.td`
    background: #c0c0c0;
`

const CommentCell = styled.td`
    font-size: 13px;
    color: #008080;
`

const ScrollBar = styled.div`
    width: 18px;
    flex: none;
    display: flex;
    flex-direction: column;
    align-items: center;
    justify-content: space-between;
    padding: 6px 0;
    border-left: 1px solid #e2e2e2;
    background: #f1f1f1;
    ${props => props.$faint && `
        width: 14px;
        border: 1px solid #e6e6e6;
    `}
`

const ScrollTrack = styled.div`
    flex: 1;
    width: 100%;
    padding: 48px 1px 0;
`

const ScrollThumb = styled.div`
    height: 15px;
    border: 1px solid #979797;
    border-radius: 2px;
    background: linear-gradient(90deg, #f5f5f5, #d2d2d4);
`

const Description = styled.div`
    height: 76px;
    flex: none;
    display: flex;
    justify-content: flex-end;
    margin: 12px 0 2px;
    padding-bottom: 12px;
`

const StatusWrapper = styled.footer`
    height: 20px;
    flex: none;
    display: flex;
    border-top: 1px solid #8a8a8a;
    background: #f0eeee;
    font-size: 12px;
`

const StatusCell = styled.span`
    width: ${props => props.$width}px;
    flex: ${props => props.$grow ? 1 : "none"};
    padding-left: 4px;
    font-size: ${props => props.$hangul ? 13 : 12}px;
    line-height: 18px;
    border-right: 1px solid #cfcdcd;
    color: ${props => props.$muted ? "#a8a49e" : "inherit"};
    &:last-child{
        border: 0;
    }
`

const TaskWrapper = styled.div`
    height: 8px;
    flex: none;
    display: flex;
    justify-content: space-between;
    border-top: 1px solid #2c3c50;
    background: linear-gradient(90deg, #6f87a8, #a6bfdf 10%, #a6bfdf 78%, #7f94b3 82%, #8a9cb8);
    svg{
        display: block;
    }
`

const ShowDesktop = styled.button`
    width: 14px;
    border: 1px solid #3c4654;
    background: linear-gradient(90deg, #59616e, #9aa5b5);
`
